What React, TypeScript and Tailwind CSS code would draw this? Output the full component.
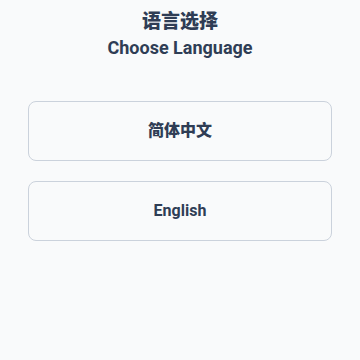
import { useState } from "react";

const languages = [
  { code: "zh", label: "简体中文", weight: "font-black" },
  { code: "en", label: "English", weight: "font-bold" },
];

export default function App() {
  const [selected, setSelected] = useState<string | null>(null);

  return (
    <div
      className="flex min-h-screen flex-col items-center bg-[#f9fafb] px-7 pt-[9px]"
      style={{ fontFamily: 'Roboto, "Noto Sans CJK SC", sans-serif' }}
    >
      <header className="flex flex-col items-center text-[#2f3d55]">
        <h1 className="text-[19px] font-black leading-[26px]">语言选择</h1>
        <p className="text-[18px] font-bold leading-[26px]">Choose Language</p>
      </header>

      <div className="mt-[40px] flex w-full flex-col gap-5">
        {languages.map((lang) => (
          <button
            key={lang.code}
            onClick={() => setSelected(lang.code)}
            className={
              "h-[60px] w-full rounded-lg border bg-[#f9fafb] text-[16px] text-[#2f3d55] " +
              lang.weight +
              " " +
              (selected === lang.code ? "border-[#94a3b8]" : "border-[#cbd2dc]")
            }
          >
            {lang.label}
          </button>
        ))}
      </div>
    </div>
  );
}
